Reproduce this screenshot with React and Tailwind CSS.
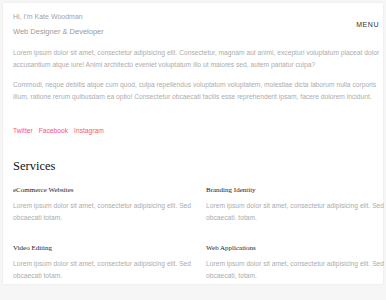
const services = [
  { title: 'eCommerce Websites', text: 'Lorem ipsum dolor sit amet, consectetur adipisicing elit. Sed obcaecati totam.' },
  { title: 'Branding Identity', text: 'Lorem ipsum dolor sit amet, consectetur adipisicing elit. Sed obcaecati. totam.' },
  { title: 'Video Editing', text: 'Lorem ipsum dolor sit amet, consectetur adipisicing elit. Sed obcaecati totam.' },
  { title: 'Web Applications', text: 'Lorem ipsum dolor sit amet, consectetur adipisicing elit. Sed obcaecati, totam.' },
]

const App = () => {
  return (
    <div className="w-[386px] h-[300px] overflow-hidden bg-[#f6f6f6] pt-[3px] pl-[3px] font-['Liberation_Sans',Arial,sans-serif]">
      <div className="w-[380px] bg-white shadow-[0_0_2px_rgba(0,0,0,0.08)] pl-[10px] pt-[8px] pb-[2px]">
        <header className="flex items-start justify-between pr-[4px]">
          <div>
            <p className="text-[7px] leading-[12px] text-[#a3a3a3]">Hi, I&apos;m Kate Woodman</p>
            <p className="mt-[2px] text-[7.5px] leading-[14px] text-[#9a9a9a]">Web Designer &amp; Developer</p>
          </div>
          <span className="mt-[8px] text-[7px] leading-[12px] tracking-[0.08em] font-medium text-[#333]">MENU</span>
        </header>

        <div className="w-[380px] text-[6.7px] leading-[12px] text-[#acacac]">
          <p className="mt-[8px]">
            Lorem ipsum dolor sit amet, consectetur adipisicing elit. Consectetur, magnam aut animi, excepturi voluptatum placeat dolor accusantium atque iure! Animi architecto eveniet voluptatum illo ut maiores sed, autem pariatur culpa?
          </p>
          <p className="mt-[8px]">
            Commodi, neque debitis atque cum quod, culpa repellendus voluptatum voluptatem, molestiae dicta laborum nulla corporis illum, ratione rerum quibusdam ea optio! Consectetur obcaecati facilis esse reprehenderit ipsam, facere dolorem incidunt.
          </p>
        </div>

        <div className="mt-[22px] flex gap-[6px] text-[6.7px] leading-[12px] text-[#f8557c]">
          <a href="#">Twitter</a>
          <a href="#">Facebook</a>
          <a href="#">Instagram</a>
        </div>

        <h2 className="mt-[20px] font-['Liberation_Serif','Times_New_Roman',serif] text-[12.5px] leading-[18px] text-[#111]">Services</h2>

        <div className="mt-[10px] grid grid-cols-[193px_193px] gap-y-[19px] w-[386px]">
          {services.map((s) => (
            <div key={s.title} className="pr-[8px]">
              <h3 className="font-['Liberation_Serif','Times_New_Roman',serif] text-[7px] leading-[10px] text-[#1a1a1a]">{s.title}</h3>
              <p className="mt-[5px] text-[6.7px] leading-[12px] text-[#acacac]">{s.text}</p>
            </div>
          ))}
        </div>
      </div>
    </div>
  )
}

export default App
